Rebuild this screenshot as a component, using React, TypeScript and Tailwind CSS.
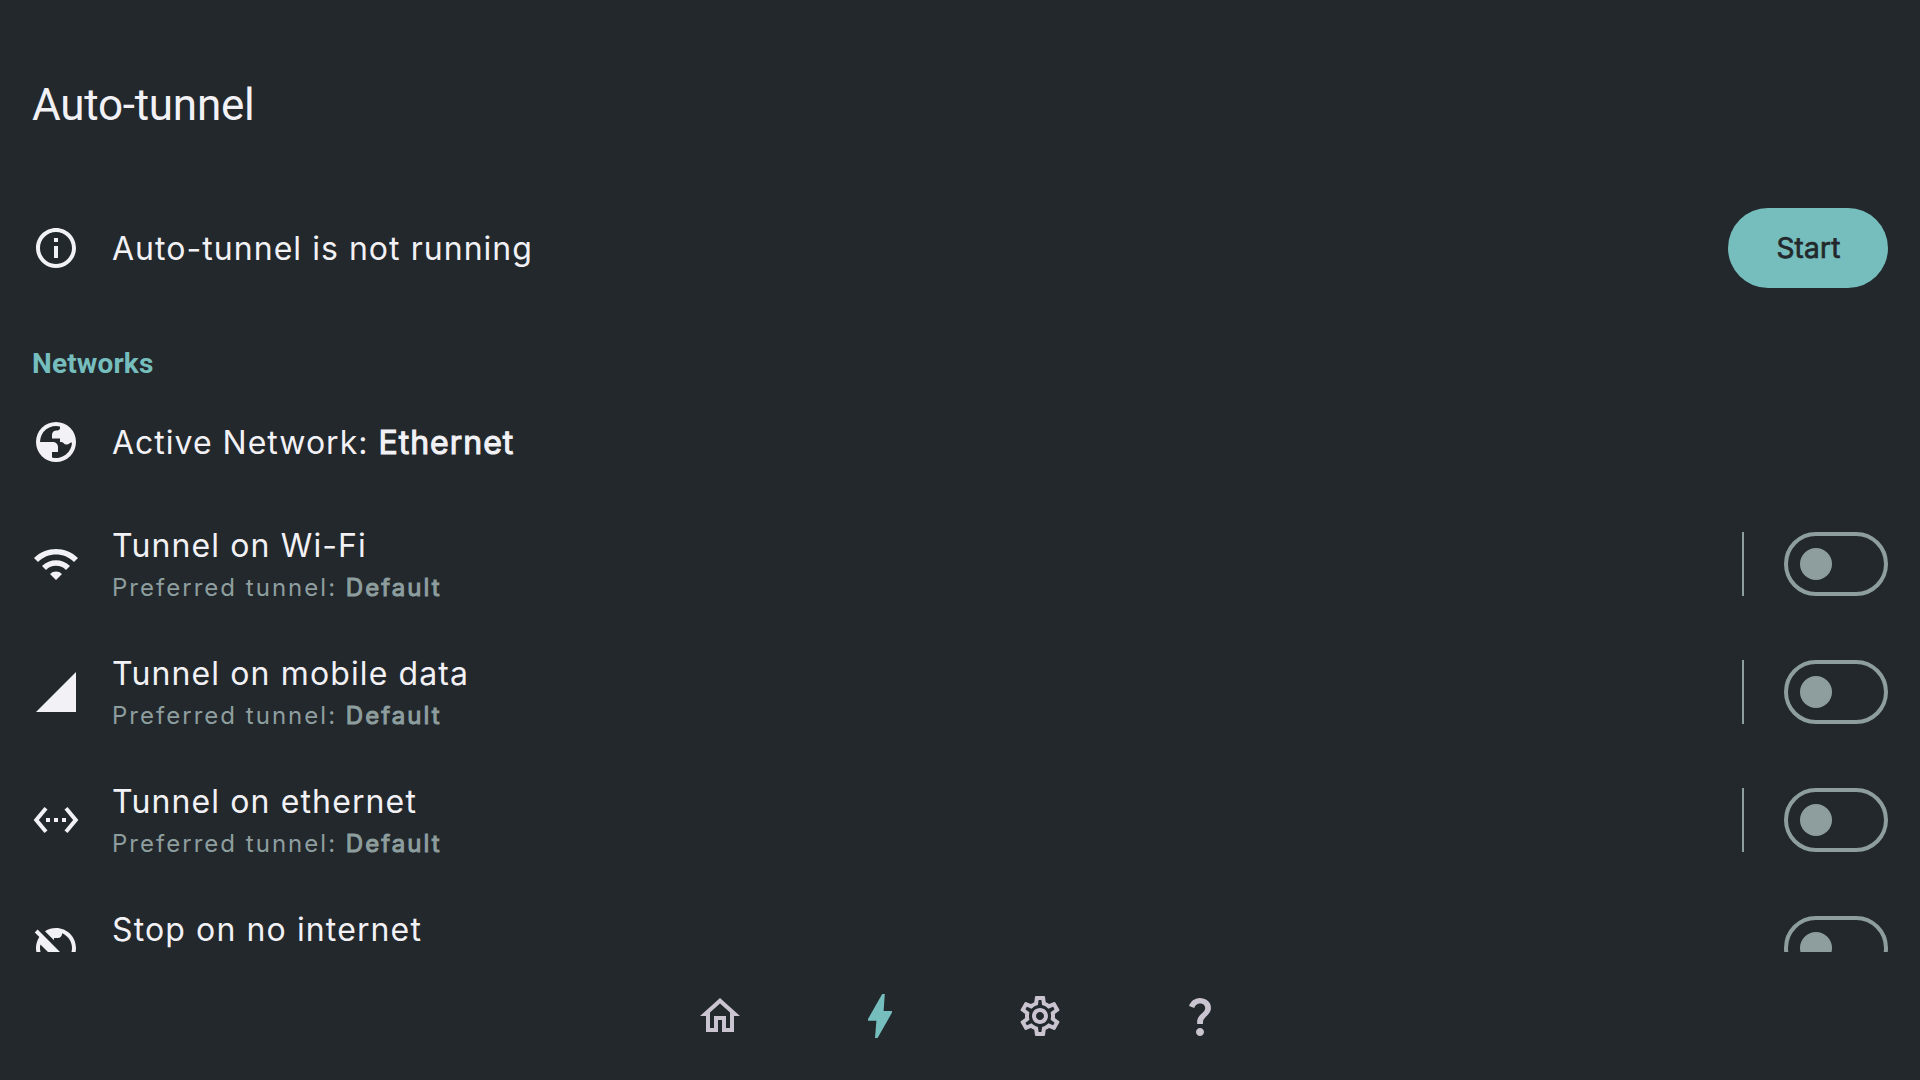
import React from "react";
import {
  MdOutlineInfo,
  MdWifi,
  MdSignalCellular4Bar,
  MdSettingsEthernet,
  MdPublicOff,
  MdOutlineHome,
  MdOutlineSettings,
  MdQuestionMark,
} from "react-icons/md";

type Icon = React.ComponentType<{ className?: string }>;

function Globe({ className }: { className?: string }) {
  return (
    <svg viewBox="0 0 24 24" className={className} fill="currentColor">
      <path
        fillRule="evenodd"
        d="M12 2a10 10 0 1 0 0 20 10 10 0 0 0 0-20zM4 12A8 8 0 0 1 14 4.26V5c0 1-.9 1.2-2 1.3-1.2.1-2 1-2 2.1v1.85h4V12c1 0 1.5.2 1.9.6.4.5.9.7 1.6.7.9 0 1.4-1.1 2.5-1.1A8 8 0 0 1 10 19.75V17h3v-2.5c0-1.4-1.1-2.5-2.5-2.5z"
      />
    </svg>
  );
}

function Bolt({ className }: { className?: string }) {
  return (
    <svg viewBox="0 0 24 24" className={className} fill="currentColor">
      <path d="M13.1 1H14.4L13.8 9.5H18V10.3L10.8 23H9.5L10.2 14.4H6V13.5z" />
    </svg>
  );
}

function Toggle() {
  return (
    <div className="flex h-16 w-[104px] shrink-0 items-center rounded-full border-4 border-[#8e9e9f] pl-3">
      <div className="size-8 rounded-full bg-[#8e9e9f]" />
    </div>
  );
}

function TunnelRow({ icon: I, title, preferred }: { icon: Icon; title: string; preferred?: boolean }) {
  return (
    <div className="flex h-32 shrink-0 items-center px-8">
      <I className="size-12 shrink-0" />
      <div className="ml-8 flex h-20 grow flex-col">
        <div className="h-12 text-[32px] leading-[43px] tracking-[1.12px]">{title}</div>
        {preferred && (
          <div className="h-8 text-[24px] leading-[32px] tracking-[2.02px] text-[#8e9e9f]">
            Preferred tunnel: <span className="[-webkit-text-stroke:1px]">Default</span>
          </div>
        )}
      </div>
      {preferred && <div className="mr-10 h-16 w-0.5 bg-[#8e9e9f]" />}
      <Toggle />
    </div>
  );
}

export default function App() {
  return (
    <div className="flex h-[1080px] w-[1920px] flex-col overflow-hidden bg-[#22282c] font-['Inter',sans-serif] text-[#f2f1f5]">
      <main className="flex h-[952px] shrink-0 flex-col overflow-hidden">
        <header className="mt-10 flex h-32 shrink-0 items-center pt-px pl-8 font-['Roboto',sans-serif] text-[44px] tracking-[-0.25px]">
          Auto-tunnel
        </header>
        <div className="mt-6 flex h-28 shrink-0 items-center px-8">
          <MdOutlineInfo className="size-12" />
          <div className="ml-8 grow pt-0.5 text-[32px] tracking-[1.04px]">Auto-tunnel is not running</div>
          <button className="h-20 w-40 rounded-full bg-[#76bdbd] pl-px text-[28px] tracking-[0.2px] text-[#22282c] [-webkit-text-stroke:0.7px]">
            Start
          </button>
        </div>
        <h2 className="mt-10 h-10 shrink-0 pl-8 font-['Roboto',sans-serif] text-[28px] leading-10 font-bold tracking-[0.15px] text-[#76bdbd]">
          Networks
        </h2>
        <div className="my-0.5 flex h-28 shrink-0 items-center px-8">
          <Globe className="size-12" />
          <div className="ml-8 pt-0.5 text-[32px] tracking-[1px]">
            Active Network: <span className="[-webkit-text-stroke:1.1px]">Ethernet</span>
          </div>
        </div>
        <TunnelRow icon={MdWifi} title="Tunnel on Wi-Fi" preferred />
        <TunnelRow icon={MdSignalCellular4Bar} title="Tunnel on mobile data" preferred />
        <TunnelRow icon={MdSettingsEthernet} title="Tunnel on ethernet" preferred />
        <TunnelRow icon={MdPublicOff} title="Stop on no internet" />
      </main>
      <nav className="flex h-32 items-center justify-center text-[#cac4d0]">
        <div className="flex w-40 justify-center"><MdOutlineHome className="size-12" /></div>
        <div className="flex w-40 justify-center text-[#76bdbd]"><Bolt className="size-12" /></div>
        <div className="flex w-40 justify-center"><MdOutlineSettings className="size-12" /></div>
        <div className="flex w-40 justify-center"><MdQuestionMark className="size-12" /></div>
      </nav>
    </div>
  );
}
